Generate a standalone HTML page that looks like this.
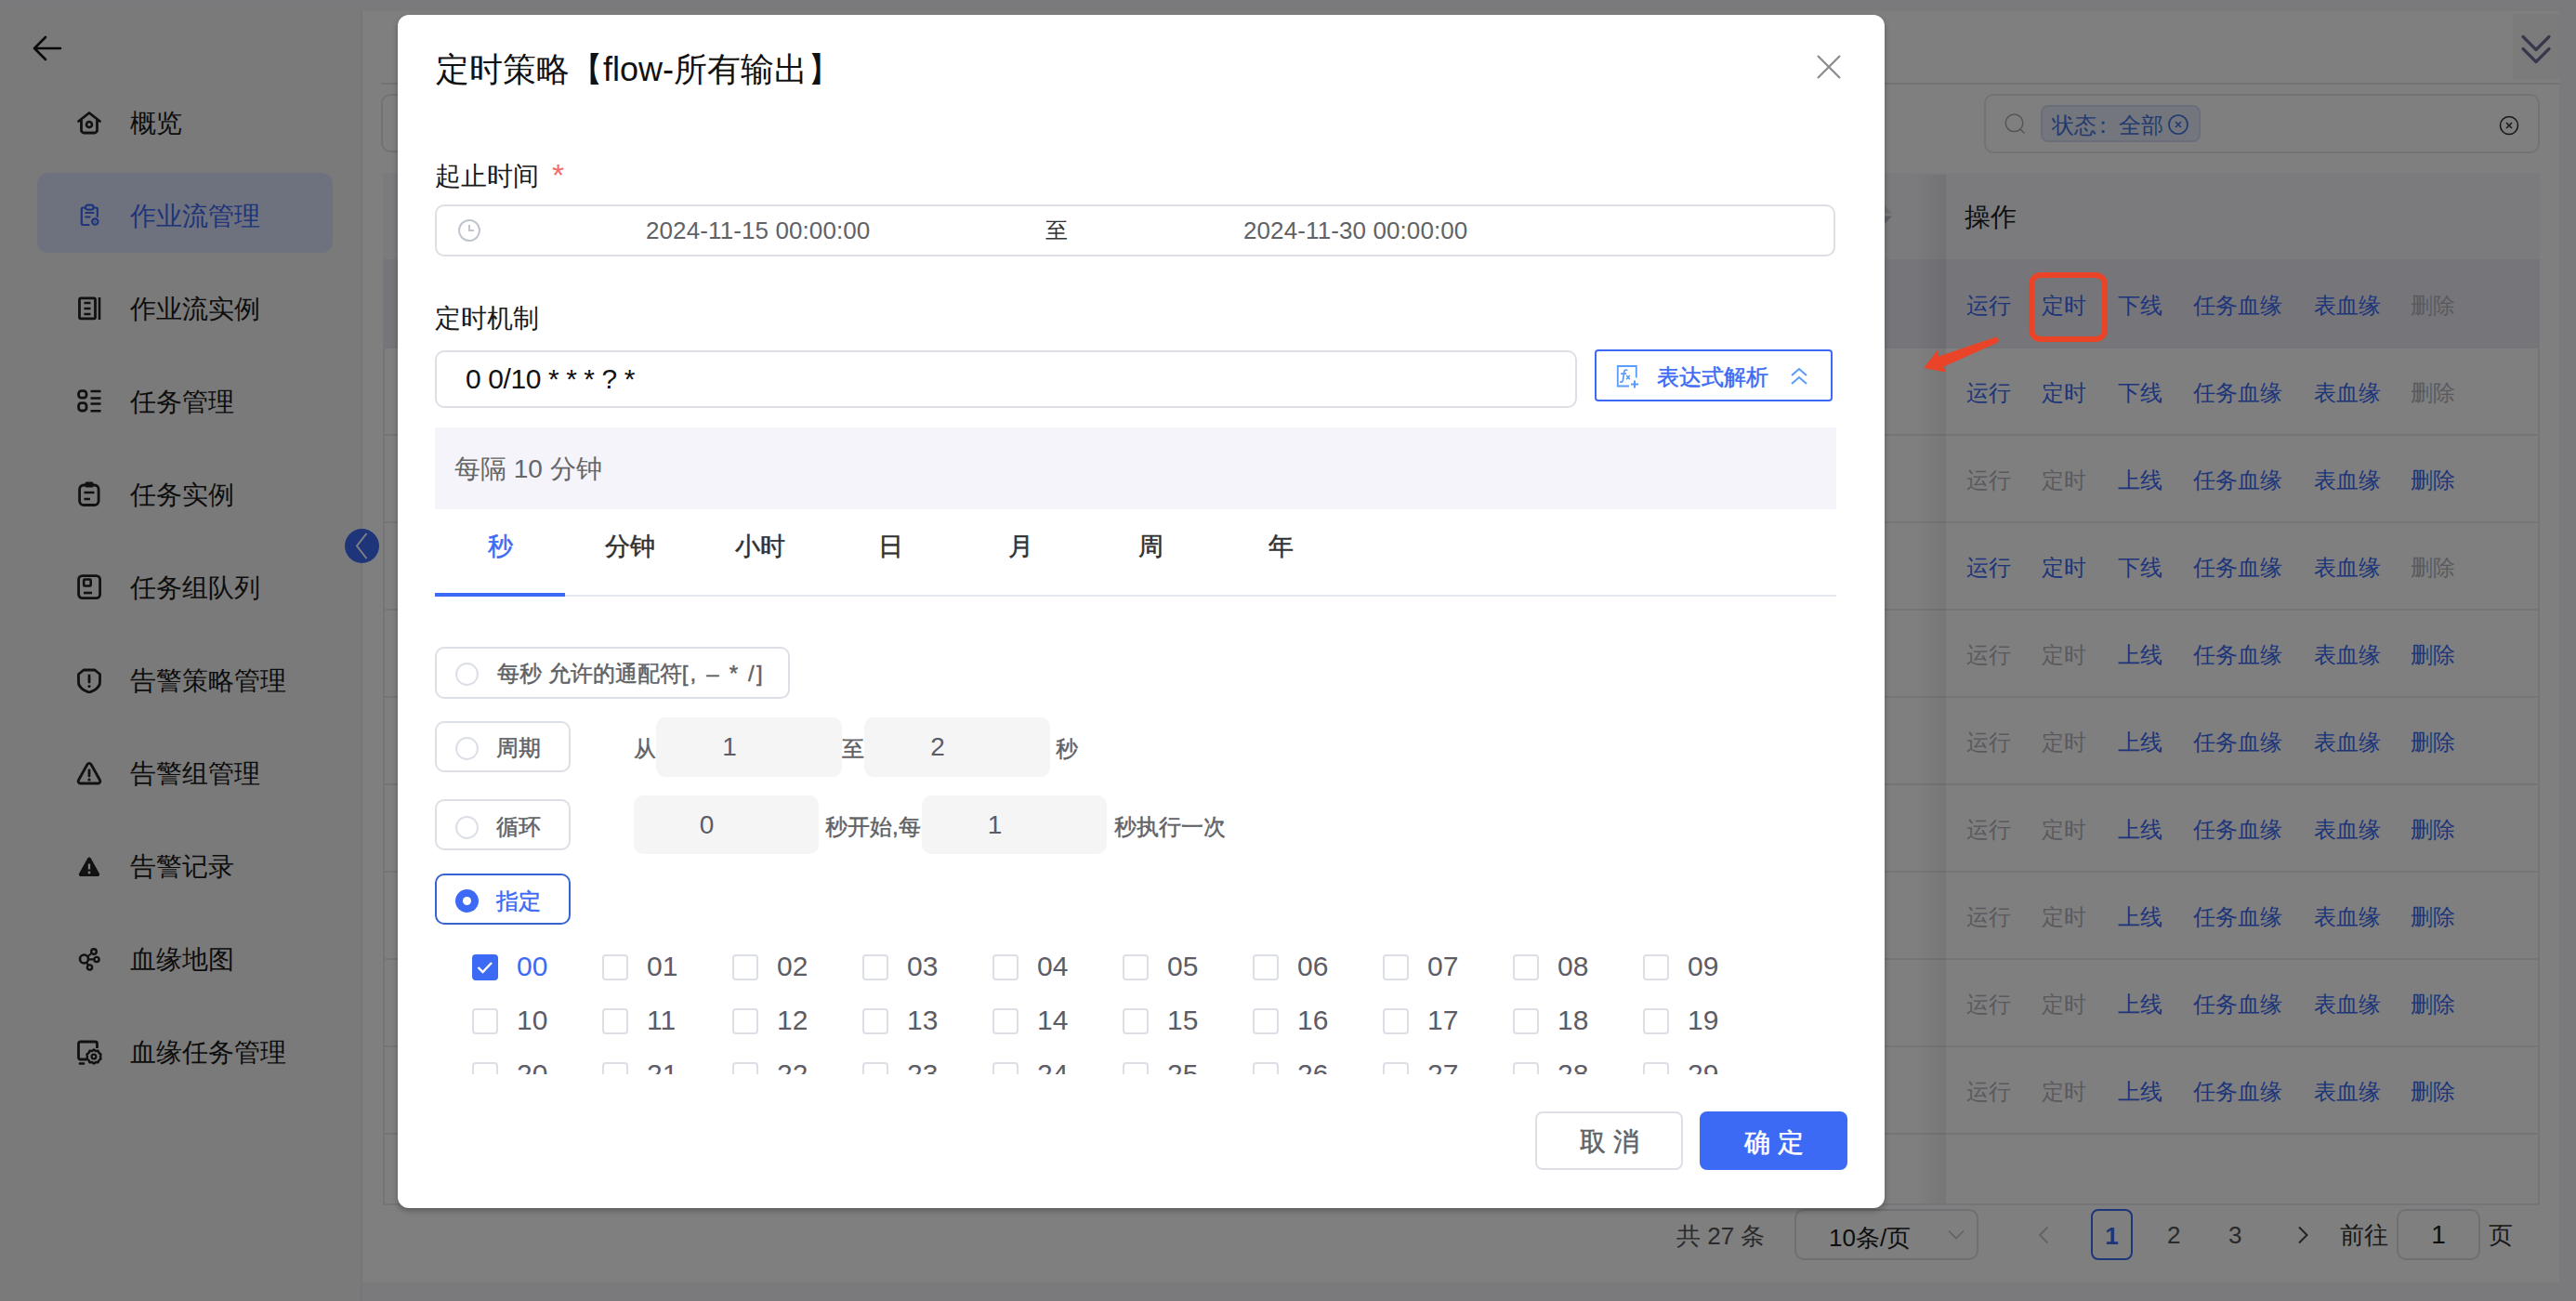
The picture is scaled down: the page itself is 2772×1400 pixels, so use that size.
<!DOCTYPE html><html><head><meta charset="utf-8"><style>
*{box-sizing:border-box;margin:0;padding:0}
html,body{width:2772px;height:1400px;overflow:hidden}
body{position:relative;background:#f4f4fb;font-family:"Liberation Sans",sans-serif;color:#1d1d1f}
.a{position:absolute}
.t{position:absolute;white-space:nowrap;line-height:1}
#side{left:0;top:12px;width:390px;height:1388px;background:#f4f4f4;border-right:2px solid #ececec}
.mi{position:absolute;left:140px;font-size:28px;color:#1a1a1a;line-height:28px;white-space:nowrap}
.ic{position:absolute;left:82px}
#main{left:390px;top:12px;width:2364px;height:1368px;background:#fff}
.link{position:absolute;font-size:24px;line-height:24px;color:#3d6af5;white-space:nowrap}
.dis{color:#b4b4bc}
#overlay{left:0;top:0;width:2772px;height:1400px;background:rgba(0,0,0,0.5)}
#dlg{left:428px;top:16px;width:1600px;height:1284px;background:#fff;border-radius:12px;box-shadow:0 3px 6px rgba(0,0,0,.28);overflow:hidden}
.box{position:absolute;border:2px solid #dcdfe6;border-radius:10px}
.inp{position:absolute;background:#f5f5f5;border-radius:10px;font-size:28px;line-height:63px;color:#5c5c66;padding-right:42px;text-align:center}
.cb{position:absolute;width:28px;height:28px;border:2px solid #dcdfe6;border-radius:4px;background:#fff}
.num{position:absolute;font-size:30px;line-height:30px;color:#5c5c66;margin-top:-2px}
.lbl{position:absolute;font-size:28px;line-height:28px;color:#1a1a1a;white-space:nowrap}
.radio{position:absolute;width:25px;height:25px;border:2px solid #dcdfe6;border-radius:50%}
.opt{position:absolute;font-size:24px;line-height:24px;color:#606266;white-space:nowrap;margin-top:1px;-webkit-text-stroke:0.45px currentColor}
.med{-webkit-text-stroke:0.5px currentColor}
</style></head><body>
<div id="side" class="a">
<svg class="a" style="left:34px;top:26px" width="34" height="30" viewBox="0 0 34 30"><path d="M31 14H3M15 2L3 14l12 12" fill="none" stroke="#111" stroke-width="2.6" stroke-linecap="round" stroke-linejoin="round"/></svg>
<div class="a" style="left:40px;top:174px;width:318px;height:86px;border-radius:12px;background:#dde2fc"></div>
<svg class="ic" style="top:106px" width="28" height="28" viewBox="0 0 28 28"><path d="M2.5 12.5L14 3.5l11.5 9M5.5 10.5v11.5a3 3 0 0 0 3 3h11a3 3 0 0 0 3-3V10.5" fill="none" stroke="#222" stroke-width="2.8" stroke-linejoin="round" stroke-linecap="round"/><circle cx="14" cy="16" r="3" fill="none" stroke="#222" stroke-width="2.6"/></svg>
<div class="mi" style="top:107px;color:#1a1a1a">概览</div>
<svg class="ic" style="top:206px" width="28" height="28" viewBox="0 0 28 28"><path d="M10 5.5H7.2a1.4 1.4 0 0 0-1.4 1.4v15.7a1.4 1.4 0 0 0 1.4 1.4h6.3M18.6 5.5h2.8a1.4 1.4 0 0 1 1.4 1.4v8" fill="none" stroke="#3d6af5" stroke-width="2.2" stroke-linecap="round"/><rect x="10.2" y="2.6" width="8.3" height="5" rx="2" fill="none" stroke="#3d6af5" stroke-width="2.1"/><path d="M10.2 11h8.3M10.2 15.5h4.5" stroke="#3d6af5" stroke-width="2.1" stroke-linecap="round"/><circle cx="20.3" cy="20.6" r="3.2" fill="none" stroke="#3d6af5" stroke-width="2.1"/><circle cx="20.3" cy="20.6" r="0.9" fill="#3d6af5"/></svg>
<div class="mi" style="top:207px;color:#3d6af5">作业流管理</div>
<svg class="ic" style="top:306px" width="28" height="28" viewBox="0 0 28 28"><rect x="3.5" y="2.8" width="17" height="22" rx="1.5" fill="none" stroke="#222" stroke-width="2.8"/><path d="M8.5 8h7M8.5 14h7M8.5 20h7M25 2v24" stroke="#222" stroke-width="2.6"/></svg>
<div class="mi" style="top:307px;color:#1a1a1a">作业流实例</div>
<svg class="ic" style="top:406px" width="28" height="28" viewBox="0 0 28 28"><rect x="2.6" y="2.6" width="8.4" height="7.6" rx="3" fill="none" stroke="#222" stroke-width="2.8"/><rect x="2.6" y="15.6" width="8.4" height="8.4" rx="3" fill="none" stroke="#222" stroke-width="2.8"/><path d="M15.5 3h11M15.5 10.5h11M15.5 16.5h11M15.5 24.2h11" stroke="#222" stroke-width="2.6"/></svg>
<div class="mi" style="top:407px;color:#1a1a1a">任务管理</div>
<svg class="ic" style="top:506px" width="28" height="28" viewBox="0 0 28 28"><rect x="3.6" y="4" width="20.5" height="21.5" rx="4.5" fill="none" stroke="#222" stroke-width="2.8"/><rect x="9.5" y="0.5" width="9" height="6" rx="1.5" fill="#222"/><path d="M8.5 12h11M8.5 19h6.5" stroke="#222" stroke-width="2.6"/></svg>
<div class="mi" style="top:507px;color:#1a1a1a">任务实例</div>
<svg class="ic" style="top:606px" width="28" height="28" viewBox="0 0 28 28"><rect x="2.6" y="1.6" width="23" height="24" rx="4" fill="none" stroke="#222" stroke-width="2.8"/><rect x="8.2" y="5.5" width="7.5" height="7" rx="1" fill="none" stroke="#222" stroke-width="2.6"/><path d="M8 20h9" stroke="#222" stroke-width="2.6"/></svg>
<div class="mi" style="top:607px;color:#1a1a1a">任务组队列</div>
<svg class="ic" style="top:706px" width="28" height="28" viewBox="0 0 28 28"><path d="M8 3h12l5.5 4.5v9c0 5-6 9-11.5 10.5C8.5 25.5 2.5 21.5 2.5 16.5v-9z" fill="none" stroke="#222" stroke-width="2.8" stroke-linejoin="round"/><path d="M14 9v7" stroke="#222" stroke-width="2.8" stroke-linecap="round"/><circle cx="14" cy="20.5" r="1.6" fill="#222"/></svg>
<div class="mi" style="top:707px;color:#1a1a1a">告警策略管理</div>
<svg class="ic" style="top:806px" width="28" height="28" viewBox="0 0 28 28"><path d="M12 4.5a2.3 2.3 0 0 1 4 0l9.5 17a2.3 2.3 0 0 1-2 3.5h-19a2.3 2.3 0 0 1-2-3.5z" fill="none" stroke="#222" stroke-width="2.8" stroke-linejoin="round"/><path d="M14 11v6" stroke="#222" stroke-width="2.8" stroke-linecap="round"/><circle cx="14" cy="21" r="1.6" fill="#222"/></svg>
<div class="mi" style="top:807px;color:#1a1a1a">告警组管理</div>
<svg class="ic" style="top:906px" width="28" height="28" viewBox="0 0 28 28"><path d="M12.3 5.5a2 2 0 0 1 3.4 0l9.2 16.5a2 2 0 0 1-1.7 3h-18.4a2 2 0 0 1-1.7-3z" fill="#222"/><path d="M14 11.5v6" stroke="#fff" stroke-width="2.4"/><circle cx="14" cy="21" r="1.4" fill="#fff"/></svg>
<div class="mi" style="top:907px;color:#1a1a1a">告警记录</div>
<svg class="ic" style="top:1006px" width="28" height="28" viewBox="0 0 28 28"><circle cx="8.5" cy="14" r="4.5" fill="none" stroke="#222" stroke-width="2.6"/><circle cx="19" cy="6" r="2.8" fill="none" stroke="#222" stroke-width="2.4"/><circle cx="22" cy="14.5" r="2.6" fill="none" stroke="#222" stroke-width="2.4"/><circle cx="14.5" cy="23" r="2.6" fill="none" stroke="#222" stroke-width="2.4"/><path d="M12 11.5l5-4M13 14.3h6.5M11 17.5l2.3 3.5" stroke="#222" stroke-width="2.2"/></svg>
<div class="mi" style="top:1007px;color:#1a1a1a">血缘地图</div>
<svg class="ic" style="top:1106px" width="28" height="28" viewBox="0 0 28 28"><path d="M11 22H4.5a2 2 0 0 1-2-2V5a2 2 0 0 1 2-2h16a2 2 0 0 1 2 2v5" fill="none" stroke="#222" stroke-width="2.8"/><path d="M4 26.5h4" stroke="#222" stroke-width="2.6" stroke-linecap="round"/><path d="M19 11.5l2 1.5 2.5-.3 1 2.3 2 1.5-.5 2.5.5 2.5-2 1.5-1 2.3-2.5-.3-2 1.5-2-1.5-2.5.3-1-2.3-2-1.5.5-2.5-.5-2.5 2-1.5 1-2.3 2.5.3z" fill="none" stroke="#222" stroke-width="2.4" stroke-linejoin="round"/><circle cx="19" cy="19" r="2.4" fill="none" stroke="#222" stroke-width="2.2"/></svg>
<div class="mi" style="top:1107px;color:#1a1a1a">血缘任务管理</div>
</div>
<div id="main" class="a"></div>
<div class="a" style="left:371px;top:569px;width:37px;height:37px;border-radius:50%;background:#3d6af5"></div>
<svg class="a" style="left:371px;top:569px" width="37" height="37" viewBox="0 0 37 37"><path d="M23.5 5L13 18.5 23.5 32" fill="none" stroke="#fff" stroke-width="2"/></svg>
<div class="a" style="left:410px;top:89px;width:2344px;height:2px;background:#e4e4ea"></div>
<div class="a" style="left:2704px;top:15px;width:50px;height:70px;background:#f7f7f7"></div>
<svg class="a" style="left:2710px;top:35px" width="38" height="38" viewBox="0 0 38 38"><path d="M5 4.5l14 14 14-14M5 17.5l14 14 14-14" fill="none" stroke="#70709a" stroke-width="3.2" stroke-linecap="round" stroke-linejoin="round"/></svg>
<div class="a" style="left:410px;top:101px;width:1500px;height:63px;border:2px solid #e4e4ea;border-radius:10px"></div>
<div class="a" style="left:2135px;top:101px;width:598px;height:64px;border:2px solid #e6e6ec;border-radius:10px"></div>
<svg class="a" style="left:2155px;top:120px" width="28" height="28" viewBox="0 0 28 28"><circle cx="12.5" cy="12.3" r="9.3" fill="none" stroke="#a8abb2" stroke-width="1.5"/><path d="M19 19l4.5 4.5" stroke="#a8abb2" stroke-width="1.5"/></svg>
<div class="a" style="left:2196px;top:113px;width:172px;height:40px;border:2px solid #d4dbf5;border-radius:8px;background:#e8edfd"></div>
<div class="t" style="left:2208px;top:123px;font-size:24px;color:#4774e0">状态<span style="position:relative;left:-5px">：</span>全部</div>
<svg class="a" style="left:2332px;top:122px" width="24" height="24" viewBox="0 0 24 24"><circle cx="12" cy="12" r="10" fill="none" stroke="#4774e0" stroke-width="1.7"/><path d="M9 9l6 6M15 9l-6 6" stroke="#4774e0" stroke-width="1.7"/></svg>
<svg class="a" style="left:2688px;top:123px" width="24" height="24" viewBox="0 0 24 24"><circle cx="12" cy="12" r="9.5" fill="none" stroke="#333" stroke-width="1.6"/><path d="M9 9l6 6M15 9l-6 6" stroke="#333" stroke-width="1.6"/></svg>
<div class="a" style="left:412px;top:186px;width:2321px;height:1111px;border:2px solid #ebebf0;background:#fff"></div>
<div class="a" style="left:412px;top:186px;width:2321px;height:93px;background:#f6f6fd"></div>
<div class="a" style="left:412px;top:279px;width:2321px;height:95px;background:#ececf4"></div>
<div class="a" style="left:412px;top:373px;width:2321px;height:2px;background:#e9ebf3"></div>
<div class="a" style="left:412px;top:467px;width:2321px;height:2px;background:#e9ebf3"></div>
<div class="a" style="left:412px;top:561px;width:2321px;height:2px;background:#e9ebf3"></div>
<div class="a" style="left:412px;top:655px;width:2321px;height:2px;background:#e9ebf3"></div>
<div class="a" style="left:412px;top:749px;width:2321px;height:2px;background:#e9ebf3"></div>
<div class="a" style="left:412px;top:843px;width:2321px;height:2px;background:#e9ebf3"></div>
<div class="a" style="left:412px;top:937px;width:2321px;height:2px;background:#e9ebf3"></div>
<div class="a" style="left:412px;top:1031px;width:2321px;height:2px;background:#e9ebf3"></div>
<div class="a" style="left:412px;top:1125px;width:2321px;height:2px;background:#e9ebf3"></div>
<div class="a" style="left:412px;top:1219px;width:2321px;height:2px;background:#e9ebf3"></div>
<div class="a" style="left:2060px;top:188px;width:34px;height:1107px;background:linear-gradient(to right,rgba(0,0,0,0),rgba(0,0,0,.07))"></div>
<div class="t" style="left:2114px;top:220px;font-size:28px;color:#1a1a1a">操作</div>
<div class="link" style="left:2116px;top:317px">运行</div>
<div class="link" style="left:2197px;top:317px">定时</div>
<div class="link" style="left:2279px;top:317px">下线</div>
<div class="link" style="left:2360px;top:317px">任务血缘</div>
<div class="link" style="left:2490px;top:317px">表血缘</div>
<div class="link dis" style="left:2594px;top:317px">删除</div>
<div class="link" style="left:2116px;top:411px">运行</div>
<div class="link" style="left:2197px;top:411px">定时</div>
<div class="link" style="left:2279px;top:411px">下线</div>
<div class="link" style="left:2360px;top:411px">任务血缘</div>
<div class="link" style="left:2490px;top:411px">表血缘</div>
<div class="link dis" style="left:2594px;top:411px">删除</div>
<div class="link dis" style="left:2116px;top:505px">运行</div>
<div class="link dis" style="left:2197px;top:505px">定时</div>
<div class="link" style="left:2279px;top:505px">上线</div>
<div class="link" style="left:2360px;top:505px">任务血缘</div>
<div class="link" style="left:2490px;top:505px">表血缘</div>
<div class="link" style="left:2594px;top:505px">删除</div>
<div class="link" style="left:2116px;top:599px">运行</div>
<div class="link" style="left:2197px;top:599px">定时</div>
<div class="link" style="left:2279px;top:599px">下线</div>
<div class="link" style="left:2360px;top:599px">任务血缘</div>
<div class="link" style="left:2490px;top:599px">表血缘</div>
<div class="link dis" style="left:2594px;top:599px">删除</div>
<div class="link dis" style="left:2116px;top:693px">运行</div>
<div class="link dis" style="left:2197px;top:693px">定时</div>
<div class="link" style="left:2279px;top:693px">上线</div>
<div class="link" style="left:2360px;top:693px">任务血缘</div>
<div class="link" style="left:2490px;top:693px">表血缘</div>
<div class="link" style="left:2594px;top:693px">删除</div>
<div class="link dis" style="left:2116px;top:787px">运行</div>
<div class="link dis" style="left:2197px;top:787px">定时</div>
<div class="link" style="left:2279px;top:787px">上线</div>
<div class="link" style="left:2360px;top:787px">任务血缘</div>
<div class="link" style="left:2490px;top:787px">表血缘</div>
<div class="link" style="left:2594px;top:787px">删除</div>
<div class="link dis" style="left:2116px;top:881px">运行</div>
<div class="link dis" style="left:2197px;top:881px">定时</div>
<div class="link" style="left:2279px;top:881px">上线</div>
<div class="link" style="left:2360px;top:881px">任务血缘</div>
<div class="link" style="left:2490px;top:881px">表血缘</div>
<div class="link" style="left:2594px;top:881px">删除</div>
<div class="link dis" style="left:2116px;top:975px">运行</div>
<div class="link dis" style="left:2197px;top:975px">定时</div>
<div class="link" style="left:2279px;top:975px">上线</div>
<div class="link" style="left:2360px;top:975px">任务血缘</div>
<div class="link" style="left:2490px;top:975px">表血缘</div>
<div class="link" style="left:2594px;top:975px">删除</div>
<div class="link dis" style="left:2116px;top:1069px">运行</div>
<div class="link dis" style="left:2197px;top:1069px">定时</div>
<div class="link" style="left:2279px;top:1069px">上线</div>
<div class="link" style="left:2360px;top:1069px">任务血缘</div>
<div class="link" style="left:2490px;top:1069px">表血缘</div>
<div class="link" style="left:2594px;top:1069px">删除</div>
<div class="link dis" style="left:2116px;top:1163px">运行</div>
<div class="link dis" style="left:2197px;top:1163px">定时</div>
<div class="link" style="left:2279px;top:1163px">上线</div>
<div class="link" style="left:2360px;top:1163px">任务血缘</div>
<div class="link" style="left:2490px;top:1163px">表血缘</div>
<div class="link" style="left:2594px;top:1163px">删除</div>
<svg class="a" style="left:2018px;top:218px" width="20" height="26" viewBox="0 0 20 26"><path d="M2 11.5L10 3.5l8 8z" fill="#d8d8e2"/><path d="M2 14.5l8 8 8-8z" fill="#bcbec8"/></svg>
<div class="t" style="left:1804px;top:1317px;font-size:26px;color:#555">共 27 条</div>
<div class="a" style="left:1931px;top:1301px;width:198px;height:55px;border:2px solid #dcdfe6;border-radius:10px"></div>
<div class="t" style="left:1968px;top:1319px;font-size:26px;color:#1a1a1a">10条/页</div>
<svg class="a" style="left:2095px;top:1322px" width="20" height="14" viewBox="0 0 20 14"><path d="M2 2.5l8 8 8-8" fill="none" stroke="#c0c4cc" stroke-width="1.6"/></svg>
<svg class="a" style="left:2190px;top:1316px" width="20" height="26" viewBox="0 0 20 26"><path d="M13.5 4.5L5 13l8.5 8.5" fill="none" stroke="#c8c8cc" stroke-width="2"/></svg>
<div class="a" style="left:2250px;top:1301px;width:45px;height:55px;border:2px solid #3d6af5;border-radius:8px;color:#3d6af5;font-size:26px;line-height:55px;text-align:center;font-weight:bold">1</div>
<div class="t" style="left:2332px;top:1316px;font-size:26px;color:#555">2</div>
<div class="t" style="left:2398px;top:1316px;font-size:26px;color:#555">3</div>
<svg class="a" style="left:2468px;top:1316px" width="20" height="26" viewBox="0 0 20 26"><path d="M6 4.5l8.5 8.5L6 21.5" fill="none" stroke="#444" stroke-width="2"/></svg>
<div class="t" style="left:2518px;top:1316px;font-size:26px;color:#333">前往</div>
<div class="a" style="left:2579px;top:1301px;width:90px;height:55px;border:2px solid #dcdfe6;border-radius:10px;font-size:28px;line-height:51px;text-align:center;color:#1a1a1a">1</div>
<div class="t" style="left:2678px;top:1316px;font-size:26px;color:#333">页</div>
<div id="overlay" class="a"></div>
<div id="dlg" class="a">
<div class="t" style="left:41px;top:41px;font-size:36px;color:#111">定时策略【flow-所有输出】</div>
<svg class="a" style="left:1527px;top:43px" width="26" height="26" viewBox="0 0 26 26"><path d="M1 1l24 24M25 1L1 25" stroke="#8a8a90" stroke-width="2.2"/></svg>
<div class="lbl" style="left:40px;top:157px">起止时间<span style="color:#f56c6c;font-size:34px;position:relative;top:1px;left:14px">*</span></div>
<div class="box" style="left:40px;top:204px;width:1507px;height:56px"></div>
<svg class="a" style="left:64px;top:219px" width="26" height="26" viewBox="0 0 26 26"><circle cx="13" cy="13" r="11" fill="none" stroke="#c0c4cc" stroke-width="2"/><path d="M13 7v6h5" fill="none" stroke="#c0c4cc" stroke-width="2"/></svg>
<div class="t" style="left:267px;top:219px;font-size:26px;letter-spacing:0.1px;color:#606266">2024-11-15 00:00:00</div>
<div class="t" style="left:697px;top:220px;font-size:24px;color:#333">至</div>
<div class="t" style="left:910px;top:219px;font-size:26px;letter-spacing:0.1px;color:#606266">2024-11-30 00:00:00</div>
<div class="lbl" style="left:40px;top:313px">定时机制</div>
<div class="box" style="left:40px;top:361px;width:1229px;height:62px"></div>
<div class="t" style="left:73px;top:377px;font-size:30px;letter-spacing:-0.4px;color:#111">0 0/10 * * * ? *</div>
<div class="a" style="left:1288px;top:360px;width:256px;height:56px;border:2px solid #3d6af5;border-radius:4px"></div>
<svg class="a" style="left:1311px;top:376px" width="26" height="26" viewBox="0 0 26 26"><path d="M14 23.5H1.8V2h20v12.5" fill="none" stroke="#5a9cf8" stroke-width="1.8"/><path d="M11.8 6.2c-1.6-.6-2.8.2-3.1 2L7.5 16.8c-.3 1.8-1.3 2.6-2.8 2.1M5.8 10.2h4.6" fill="none" stroke="#5a9cf8" stroke-width="1.7" stroke-linecap="round"/><path d="M11.2 12l3.6 4.2M14.8 12l-3.6 4.2" stroke="#5a9cf8" stroke-width="1.6"/><path d="M20 17.5v8M16 21.5h8" stroke="#5a9cf8" stroke-width="2"/></svg>
<div class="t" style="left:1355px;top:378px;font-size:24px;-webkit-text-stroke:0.45px currentColor;color:#3d6af5">表达式解析</div>
<svg class="a" style="left:1498px;top:379px" width="20" height="20" viewBox="0 0 20 20"><path d="M2 9l8-7 8 7M2 18l8-7 8 7" fill="none" stroke="#5a9cf8" stroke-width="2"/></svg>
<div class="a" style="left:40px;top:444px;width:1508px;height:88px;background:#f4f4fa"></div>
<div class="t" style="left:61px;top:475px;font-size:28px;color:#666">每隔 10 分钟</div>
<div class="t" style="left:40px;top:559px;width:140px;text-align:center;font-size:27px;-webkit-text-stroke:0.5px currentColor;color:#3d6af5">秒</div>
<div class="t" style="left:180px;top:559px;width:140px;text-align:center;font-size:27px;-webkit-text-stroke:0.5px currentColor;color:#303133">分钟</div>
<div class="t" style="left:320px;top:559px;width:140px;text-align:center;font-size:27px;-webkit-text-stroke:0.5px currentColor;color:#303133">小时</div>
<div class="t" style="left:460px;top:559px;width:140px;text-align:center;font-size:27px;-webkit-text-stroke:0.5px currentColor;color:#303133">日</div>
<div class="t" style="left:600px;top:559px;width:140px;text-align:center;font-size:27px;-webkit-text-stroke:0.5px currentColor;color:#303133">月</div>
<div class="t" style="left:740px;top:559px;width:140px;text-align:center;font-size:27px;-webkit-text-stroke:0.5px currentColor;color:#303133">周</div>
<div class="t" style="left:880px;top:559px;width:140px;text-align:center;font-size:27px;-webkit-text-stroke:0.5px currentColor;color:#303133">年</div>
<div class="a" style="left:40px;top:624px;width:1508px;height:2px;background:#e4e7ed"></div>
<div class="a" style="left:40px;top:622px;width:140px;height:4px;background:#3d6af5"></div>
<div class="box" style="left:40px;top:680px;width:382px;height:56px"></div>
<div class="radio" style="left:62px;top:697px"></div>
<div class="opt" style="left:107px;top:696px">每秒 允许的通配符<span style="letter-spacing:2.2px">[, – * /</span>]</div>
<div class="box" style="left:40px;top:760px;width:146px;height:55px"></div>
<div class="radio" style="left:62px;top:777px"></div>
<div class="opt" style="left:106px;top:776px">周期</div>
<div class="box" style="left:40px;top:844px;width:146px;height:55px"></div>
<div class="radio" style="left:62px;top:862px"></div>
<div class="opt" style="left:106px;top:861px">循环</div>
<div class="box" style="left:40px;top:924px;width:146px;height:55px;border-color:#3663d0"></div>
<div class="a" style="left:62px;top:941px;width:25px;height:25px;border-radius:50%;background:#3d6af5"></div>
<div class="a" style="left:70px;top:949px;width:9px;height:9px;border-radius:50%;background:#fff"></div>
<div class="opt" style="left:106px;top:941px;color:#3d6af5">指定</div>
<div class="opt" style="left:254px;top:777px">从</div>
<div class="inp" style="left:278px;top:756px;width:200px;height:64px">1</div>
<div class="opt" style="left:478px;top:777px">至</div>
<div class="inp" style="left:502px;top:756px;width:200px;height:64px">2</div>
<div class="opt" style="left:708px;top:777px">秒</div>
<div class="inp" style="left:254px;top:840px;width:199px;height:63px">0</div>
<div class="opt" style="left:460px;top:861px">秒开始,每</div>
<div class="inp" style="left:564px;top:840px;width:199px;height:63px">1</div>
<div class="opt" style="left:771px;top:861px">秒执行一次</div>
<div class="a" style="left:40px;top:1000px;width:1508px;height:140px;overflow:hidden">
<div class="cb" style="left:40px;top:11px;background:#3d6af5;border-color:#3d6af5"></div>
<svg class="a" style="left:40px;top:11px" width="28" height="28" viewBox="0 0 28 28"><path d="M6.5 14l5 5L21 9" fill="none" stroke="#fff" stroke-width="2.4"/></svg>
<div class="num" style="left:88px;top:11px;color:#3d6af5">00</div>
<div class="cb" style="left:180px;top:11px"></div>
<div class="num" style="left:228px;top:11px">01</div>
<div class="cb" style="left:320px;top:11px"></div>
<div class="num" style="left:368px;top:11px">02</div>
<div class="cb" style="left:460px;top:11px"></div>
<div class="num" style="left:508px;top:11px">03</div>
<div class="cb" style="left:600px;top:11px"></div>
<div class="num" style="left:648px;top:11px">04</div>
<div class="cb" style="left:740px;top:11px"></div>
<div class="num" style="left:788px;top:11px">05</div>
<div class="cb" style="left:880px;top:11px"></div>
<div class="num" style="left:928px;top:11px">06</div>
<div class="cb" style="left:1020px;top:11px"></div>
<div class="num" style="left:1068px;top:11px">07</div>
<div class="cb" style="left:1160px;top:11px"></div>
<div class="num" style="left:1208px;top:11px">08</div>
<div class="cb" style="left:1300px;top:11px"></div>
<div class="num" style="left:1348px;top:11px">09</div>
<div class="cb" style="left:40px;top:69px"></div>
<div class="num" style="left:88px;top:69px">10</div>
<div class="cb" style="left:180px;top:69px"></div>
<div class="num" style="left:228px;top:69px">11</div>
<div class="cb" style="left:320px;top:69px"></div>
<div class="num" style="left:368px;top:69px">12</div>
<div class="cb" style="left:460px;top:69px"></div>
<div class="num" style="left:508px;top:69px">13</div>
<div class="cb" style="left:600px;top:69px"></div>
<div class="num" style="left:648px;top:69px">14</div>
<div class="cb" style="left:740px;top:69px"></div>
<div class="num" style="left:788px;top:69px">15</div>
<div class="cb" style="left:880px;top:69px"></div>
<div class="num" style="left:928px;top:69px">16</div>
<div class="cb" style="left:1020px;top:69px"></div>
<div class="num" style="left:1068px;top:69px">17</div>
<div class="cb" style="left:1160px;top:69px"></div>
<div class="num" style="left:1208px;top:69px">18</div>
<div class="cb" style="left:1300px;top:69px"></div>
<div class="num" style="left:1348px;top:69px">19</div>
<div class="cb" style="left:40px;top:127px"></div>
<div class="num" style="left:88px;top:127px">20</div>
<div class="cb" style="left:180px;top:127px"></div>
<div class="num" style="left:228px;top:127px">21</div>
<div class="cb" style="left:320px;top:127px"></div>
<div class="num" style="left:368px;top:127px">22</div>
<div class="cb" style="left:460px;top:127px"></div>
<div class="num" style="left:508px;top:127px">23</div>
<div class="cb" style="left:600px;top:127px"></div>
<div class="num" style="left:648px;top:127px">24</div>
<div class="cb" style="left:740px;top:127px"></div>
<div class="num" style="left:788px;top:127px">25</div>
<div class="cb" style="left:880px;top:127px"></div>
<div class="num" style="left:928px;top:127px">26</div>
<div class="cb" style="left:1020px;top:127px"></div>
<div class="num" style="left:1068px;top:127px">27</div>
<div class="cb" style="left:1160px;top:127px"></div>
<div class="num" style="left:1208px;top:127px">28</div>
<div class="cb" style="left:1300px;top:127px"></div>
<div class="num" style="left:1348px;top:127px">29</div>
</div>
<div class="a" style="left:1224px;top:1180px;width:159px;height:63px;border:2px solid #dcdfe6;border-radius:8px;font-size:28px;line-height:62px;-webkit-text-stroke:0.5px currentColor;text-align:center;color:#606266;letter-spacing:8px;text-indent:8px">取消</div>
<div class="a" style="left:1401px;top:1180px;width:159px;height:63px;background:#3d6af5;border-radius:8px;font-size:28px;line-height:67px;-webkit-text-stroke:0.5px currentColor;text-align:center;color:#fff;letter-spacing:8px;text-indent:8px">确定</div>
</div>
<div class="a" style="left:2183px;top:293px;width:85px;height:75px;border:6px solid #ea4428;border-radius:13px"></div>
<svg class="a" style="left:2050px;top:280px" width="240" height="140" viewBox="0 0 240 140"><path d="M96.5 83.6L35.6 104.2L35 97.4L21 115.7L44 120L40.4 114.6L98.6 88.6A2.6 2.6 0 0 0 96.5 83.6Z" fill="#ea4428" stroke="#ea4428" stroke-width="1" stroke-linejoin="round"/></svg>
</body></html>
